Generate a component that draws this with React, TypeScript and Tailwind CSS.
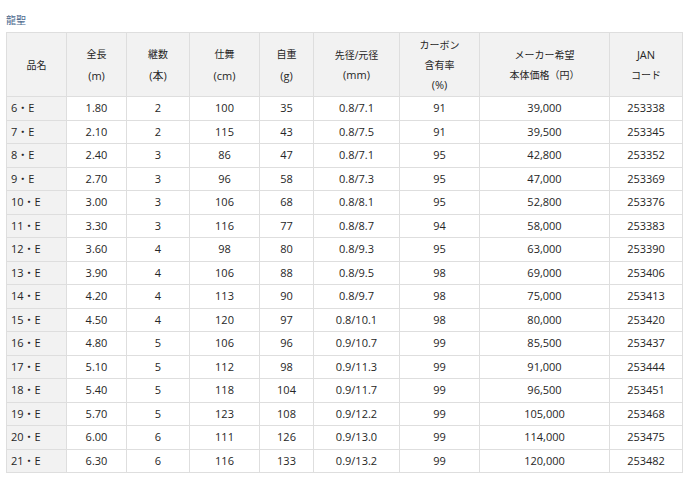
const rows: string[][] = [
  ["6・E", "1.80", "2", "100", "35", "0.8/7.1", "91", "39,000", "253338"],
  ["7・E", "2.10", "2", "115", "43", "0.8/7.5", "91", "39,500", "253345"],
  ["8・E", "2.40", "3", "86", "47", "0.8/7.1", "95", "42,800", "253352"],
  ["9・E", "2.70", "3", "96", "58", "0.8/7.3", "95", "47,000", "253369"],
  ["10・E", "3.00", "3", "106", "68", "0.8/8.1", "95", "52,800", "253376"],
  ["11・E", "3.30", "3", "116", "77", "0.8/8.7", "94", "58,000", "253383"],
  ["12・E", "3.60", "4", "98", "80", "0.8/9.3", "95", "63,000", "253390"],
  ["13・E", "3.90", "4", "106", "88", "0.8/9.5", "98", "69,000", "253406"],
  ["14・E", "4.20", "4", "113", "90", "0.8/9.7", "98", "75,000", "253413"],
  ["15・E", "4.50", "4", "120", "97", "0.8/10.1", "98", "80,000", "253420"],
  ["16・E", "4.80", "5", "106", "96", "0.9/10.7", "99", "85,500", "253437"],
  ["17・E", "5.10", "5", "112", "98", "0.9/11.3", "99", "91,000", "253444"],
  ["18・E", "5.40", "5", "118", "104", "0.9/11.7", "99", "96,500", "253451"],
  ["19・E", "5.70", "5", "123", "108", "0.9/12.2", "99", "105,000", "253468"],
  ["20・E", "6.00", "6", "111", "126", "0.9/13.0", "99", "114,000", "253475"],
  ["21・E", "6.30", "6", "116", "133", "0.9/13.2", "99", "120,000", "253482"],
]

// header cells: text lines, column width, line height
const headers: { lines: string[]; w: string; lh: string }[] = [
  { lines: ["品名"], w: "w-[60px]", lh: "leading-[20px]" },
  { lines: ["全長", "(m)"], w: "w-[60px]", lh: "leading-[22px]" },
  { lines: ["継数", "(本)"], w: "w-[63px]", lh: "leading-[22px]" },
  { lines: ["仕舞", "(cm)"], w: "w-[70px]", lh: "leading-[22px]" },
  { lines: ["自重", "(g)"], w: "w-[54px]", lh: "leading-[22px]" },
  { lines: ["先径/元径", "(mm)"], w: "w-[86px]", lh: "leading-[20px]" },
  { lines: ["カーボン", "含有率", "(%)"], w: "w-[80px]", lh: "leading-[20px]" },
  { lines: ["メーカー希望", "本体価格（円）"], w: "w-[130px]", lh: "leading-[20px]" },
  { lines: ["JAN", "コード"], w: "w-[73px]", lh: "leading-[20px]" },
]

const hasCjk = (s: string) => /[\u3000-\u9fff\uff00-\uffef]/.test(s)

export default function App() {
  return (
    <div className="w-[700px] h-[495px] bg-white px-[6px] pt-[14px] text-[#262626] font-['Open_Sans','Noto_Sans_CJK_JP',sans-serif]">
      <div className="text-[10px] leading-[12px] text-[#4e6b8f] mb-[6px]">龍聖</div>
      <table className="w-[676px] table-fixed border-collapse text-[11px]">
        <thead>
          <tr className="h-[64px] bg-[#f2f2f2]">
            {headers.map((h, i) => (
              <th key={i} className={`${h.w} ${h.lh} border border-[#dedede] font-normal text-center`}>
                {h.lines.map((l, j) => (
                  <div key={j} className={hasCjk(l) && l !== "(本)" ? "text-[10px]" : ""}>
                    {l}
                  </div>
                ))}
              </th>
            ))}
          </tr>
        </thead>
        <tbody>
          {rows.map((r, i) => (
            <tr key={i} className="h-[23.5px]">
              {r.map((c, j) => (
                <td
                  key={j}
                  className={
                    j === 0
                      ? "border border-[#dedede] bg-[#f2f2f2] pl-[4px] text-left"
                      : "border border-[#dedede] text-center"
                  }
                >
                  {c}
                </td>
              ))}
            </tr>
          ))}
        </tbody>
      </table>
    </div>
  )
}
